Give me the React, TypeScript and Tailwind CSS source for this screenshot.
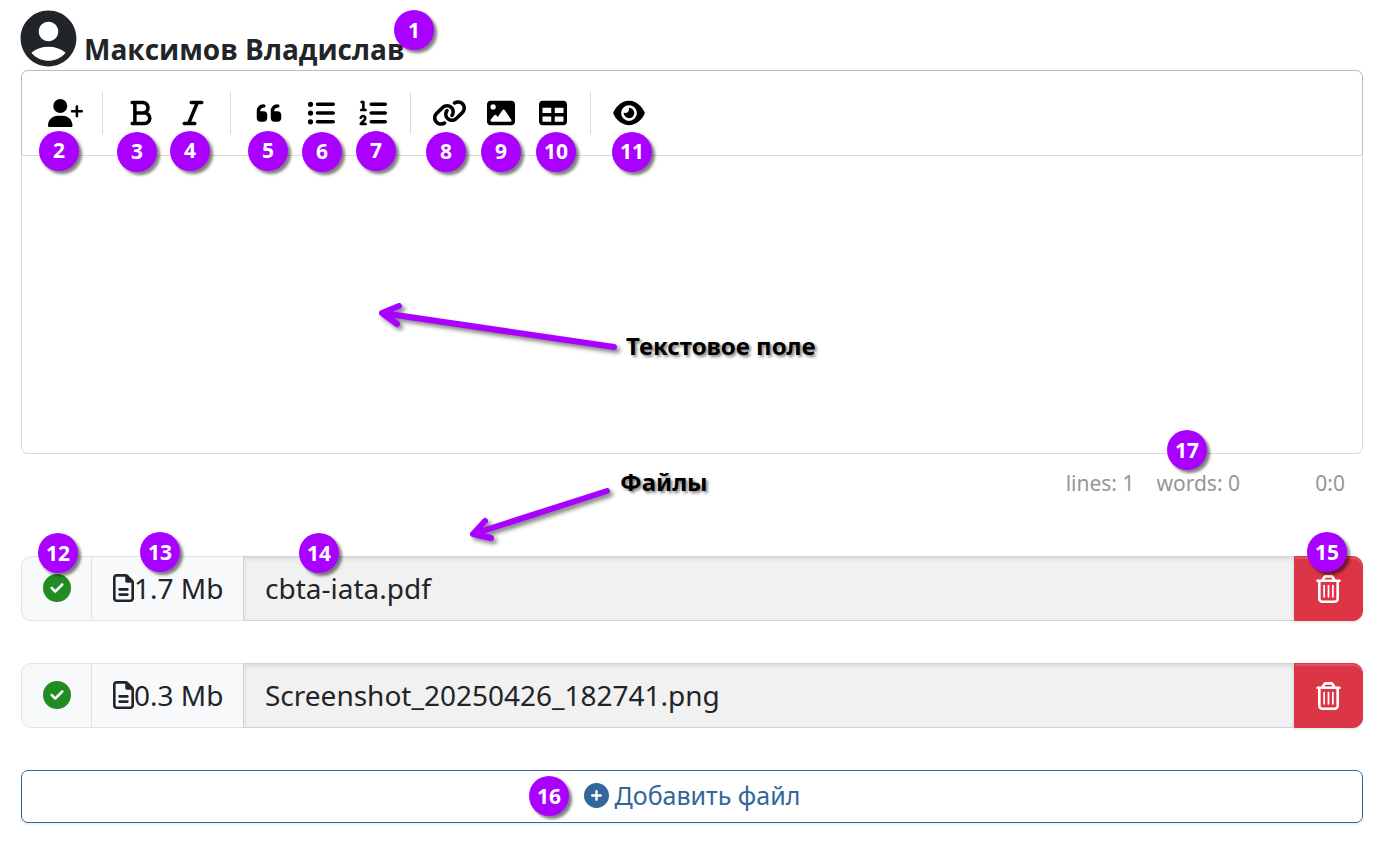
import type { ReactNode } from "react";
import clsx from "clsx";
import type { IconType } from "react-icons";
import {
  FaBold,
  FaCircleCheck,
  FaCirclePlus,
  FaEye,
  FaImage,
  FaItalic,
  FaLink,
  FaListOl,
  FaListUl,
  FaQuoteLeft,
  FaRegFileLines,
  FaRegTrashCan,
  FaTable,
  FaUserPlus,
} from "react-icons/fa6";
import { MdAccountCircle } from "react-icons/md";

type Tool = {
  icon: IconType;
  label: string;
  mark: number;
  markClass: string;
  iconClass?: string;
};

const toolGroups: Tool[][] = [
  [
    {
      icon: FaUserPlus,
      label: "Упомянуть",
      mark: 2,
      markClass: "top-11 left-0",
      iconClass: "h-7 w-[35px]",
    },
  ],
  [
    { icon: FaBold, label: "Жирный", mark: 3, markClass: "top-[45px] left-0.5" },
    { icon: FaItalic, label: "Курсив", mark: 4, markClass: "top-11 left-[3px]" },
  ],
  [
    { icon: FaQuoteLeft, label: "Цитата", mark: 5, markClass: "top-11 left-[5px]" },
    { icon: FaListUl, label: "Список", mark: 6, markClass: "top-[45px] left-[7px]" },
    { icon: FaListOl, label: "Нумерованный список", mark: 7, markClass: "top-11 left-[9px]" },
  ],
  [
    {
      icon: FaLink,
      label: "Ссылка",
      mark: 8,
      markClass: "top-[45px] left-[3px]",
      iconClass: "h-7 w-[35px]",
    },
    { icon: FaImage, label: "Изображение", mark: 9, markClass: "top-[45px] left-1.5" },
    { icon: FaTable, label: "Таблица", mark: 10, markClass: "top-[45px] left-[9px]" },
  ],
  [
    {
      icon: FaEye,
      label: "Предпросмотр",
      mark: 11,
      markClass: "top-[45px] left-[9px]",
      iconClass: "h-7 w-8",
    },
  ],
];

const files = [
  { name: "cbta-iata.pdf", size: "1.7 Mb", marked: true },
  { name: "Screenshot_20250426_182741.png", size: "0.3 Mb", marked: false },
];

// Numbered callout, placed over the control it explains
function Mark({ className, children }: { className: string; children: ReactNode }) {
  return (
    <span
      className={clsx(
        "pointer-events-none absolute z-10 flex size-10 items-center justify-center rounded-full bg-[#aa00ff] text-[21px] leading-none font-bold text-white shadow-[3px_3px_3px_rgba(0,0,0,0.5)]",
        className,
      )}
    >
      {children}
    </span>
  );
}

function Caption({ className, children }: { className: string; children: ReactNode }) {
  return (
    <span
      className={clsx(
        "pointer-events-none absolute z-10 text-[24px] leading-8 font-bold whitespace-nowrap text-black [text-shadow:2px_2px_3px_rgba(0,0,0,0.5)]",
        className,
      )}
    >
      {children}
    </span>
  );
}

function Toolbar() {
  return (
    <div className="flex h-[85px] items-center rounded-t-[7px] border border-b-0 border-[#bbbbbb] px-[17px]">
      {toolGroups.map((group, i) => (
        <div key={group[0].label} className="flex items-center">
          {i > 0 && <span className="mr-3 ml-[11px] h-[42px] w-px bg-[#d9d9d9]" />}
          {group.map(({ icon: Icon, label, mark, markClass, iconClass = "size-7" }) => (
            <div key={label} className="relative">
              <button
                type="button"
                aria-label={label}
                className="flex h-[53px] w-[52px] items-center justify-center text-black"
              >
                <Icon className={clsx("shrink-0", iconClass)} />
              </button>
              <Mark className={markClass}>{mark}</Mark>
            </div>
          ))}
        </div>
      ))}
    </div>
  );
}

function Editor() {
  return (
    <section className="relative">
      <Toolbar />
      <textarea
        aria-label="Текстовое поле"
        className="block h-[299px] w-full resize-none rounded-b-[7px] border border-[#dadada] px-5 py-4 text-[28px] outline-none"
      />
      <svg
        className="pointer-events-none absolute top-[230px] left-[354px] h-14 w-[250px] drop-shadow-[3px_3px_2px_rgba(0,0,0,0.5)]"
        viewBox="0 0 250 56"
        fill="none"
        stroke="#aa00ff"
        strokeWidth="6"
        strokeLinecap="round"
        strokeLinejoin="round"
      >
        <path d="M239 47 7 13M24 6 7 13l15 11" />
      </svg>
      <Caption className="top-[260px] left-[605px]">Текстовое поле</Caption>
      <div className="relative flex h-[59px] items-center justify-end gap-[22px] pr-[18px] text-[21px] text-[#959694]">
        <span>lines: 1</span>
        <span>words: 0</span>
        <span className="w-[83px] text-right">0:0</span>
        <Mark className="-top-6 right-[156px]">17</Mark>
      </div>
      <svg
        className="pointer-events-none absolute top-[410px] left-[440px] h-[70px] w-[160px] drop-shadow-[3px_3px_2px_rgba(0,0,0,0.5)]"
        viewBox="0 0 160 70"
        fill="none"
        stroke="#aa00ff"
        strokeWidth="6"
        strokeLinecap="round"
        strokeLinejoin="round"
      >
        <path d="M146 11 12 54M24 41 12 54l18 4" />
      </svg>
      <Caption className="top-[396px] left-[599px]">Файлы</Caption>
    </section>
  );
}

function FileRow({ name, size, marked }: { name: string; size: string; marked: boolean }) {
  return (
    <li className="relative flex h-[65px] text-[28px] text-[#212529]">
      <span className="flex w-[71px] items-center justify-center rounded-l-[10px] border border-[#dee2e6] bg-[#f8f9fa] pb-0.5">
        <FaCircleCheck className="size-7 text-[#228b22]" />
      </span>
      <span className="flex w-[151px] items-center border-y border-[#dee2e6] bg-[#f8f9fa] pb-0.5 pl-[21px] whitespace-nowrap">
        <FaRegFileLines className="h-7 w-[21px] shrink-0" />
        {size}
      </span>
      <input
        readOnly
        aria-label="Имя файла"
        value={name}
        className="min-w-0 flex-1 border border-r-0 border-[#d0d3d6] bg-[#f1f1f1] px-[21px] pb-0.5 shadow-[inset_0_2px_4px_rgba(0,0,0,0.1)] outline-none"
      />
      <button
        type="button"
        aria-label={`Удалить ${name}`}
        className="flex w-[69px] items-center justify-center rounded-r-[10px] border border-[#dc3545] bg-[#dc3545] text-white shadow-[inset_0_2px_0_rgba(255,255,255,0.15),0_2px_2px_rgba(0,0,0,0.08)]"
      >
        <FaRegTrashCan className="h-7 w-[25px]" />
      </button>
      {marked && (
        <>
          <Mark className="-top-[23px] left-[17px]">12</Mark>
          <Mark className="-top-6 left-[119px]">13</Mark>
          <Mark className="-top-[23px] left-[278px]">14</Mark>
          <Mark className="-top-6 right-4">15</Mark>
        </>
      )}
    </li>
  );
}

export default function App() {
  return (
    <main className="bg-white px-[21px] pt-[11px] pb-[18px] font-['Noto_Sans',sans-serif]">
      <header className="flex h-[59px] items-start gap-3 text-[#212529]">
        {/* the glyph fills 20 of its 24 units, so the margin pulls the circle to the edge */}
        <MdAccountCircle className="-m-1.5 size-[67px] shrink-0" />
        <h1 className="relative -ml-1 mt-[17px] font-['Open_Sans','Noto_Sans',sans-serif] text-[28px] leading-[42px] font-bold">
          Максимов Владислав
          <Mark className="-top-[18px] left-[310px]">1</Mark>
        </h1>
      </header>
      <Editor />
      <ul className="mt-[43px] flex flex-col gap-[42px]">
        {files.map((file) => (
          <FileRow key={file.name} {...file} />
        ))}
      </ul>
      <button
        type="button"
        className="relative mt-[42px] flex h-[53px] w-full items-center justify-center gap-1.5 rounded-[7px] border border-[#336699] pb-0.5 text-[25px] text-[#336699] shadow-[0_2px_2px_rgba(0,0,0,0.06)]"
      >
        <FaCirclePlus className="size-[25px]" />
        Добавить файл
        <Mark className="top-[5px] right-1/2 mr-[123px]">16</Mark>
      </button>
    </main>
  );
}
